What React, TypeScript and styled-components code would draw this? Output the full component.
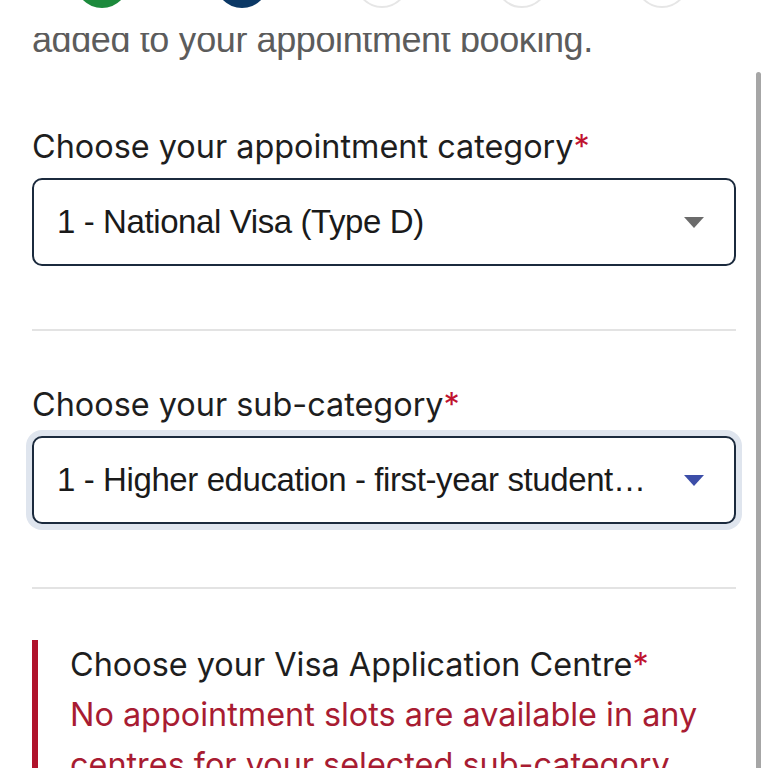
import styled, { createGlobalStyle } from "styled-components";

const GlobalStyle = createGlobalStyle`
  html, body {
    margin: 0;
    padding: 0;
    background: #ffffff;
  }
  body {
    font-family: Inter, "Noto Sans", sans-serif;
  }
`;

const steps = ["#1c8a3c", "#0b3865", "", "", ""];

const Page = styled.div`
  position: relative;
  width: 768px;
  height: 768px;
  overflow: hidden;
  background: #ffffff;
`;

const Stepper = styled.div`
  display: flex;
  gap: 86px;
  height: 33px;
  padding-left: 75px;
  overflow: hidden;
  background: #ffffff;
`;

const StepDot = styled.div<{ $color: string }>`
  flex: none;
  width: 54px;
  height: 54px;
  margin-top: -46px;
  border-radius: 50%;
  box-sizing: border-box;
  background: ${(p) => p.$color || "#ffffff"};
  border: ${(p) => (p.$color ? "none" : "2px solid #e6e6e6")};
`;

const IntroClip = styled.div`
  height: 35px;
  overflow: hidden;
  padding: 0 32px;
`;

const Intro = styled.p`
  margin: -13px 0 0;
  font-family: "Liberation Sans", Arial, sans-serif;
  font-size: 36px;
  line-height: 40px;
  color: #5c5c5c;
  letter-spacing: -0.4px;
  white-space: nowrap;
`;

const Form = styled.div`
  padding: 59px 32px 0;
  width: 704px;
`;

const Field = styled.div`
  display: flex;
  flex-direction: column;
  gap: 11px;
`;

const Label = styled.div`
  font-size: 32.4px;
  line-height: 40px;
  color: #1e1e1e;
  white-space: nowrap;
`;

const Star = styled.span`
  color: #c0132f;
`;

const Select = styled.div<{ $focused?: boolean }>`
  display: flex;
  align-items: center;
  gap: 26px;
  height: 88px;
  box-sizing: border-box;
  padding: 0 30px 0 23px;
  border: 2px solid #1b2a3d;
  border-radius: 10px;
  background: #ffffff;
  box-shadow: ${(p) => (p.$focused ? "0 0 0 6px #dfe5ee" : "none")};
`;

const SelectValue = styled.span`
  flex: 1;
  min-width: 0;
  white-space: nowrap;
  overflow: hidden;
  text-overflow: ellipsis;
  font-family: "Liberation Sans", Arial, sans-serif;
  font-size: 33px;
  color: #1a1a1a;
  letter-spacing: -0.4px;
`;

const Divider = styled.hr<{ $last?: boolean }>`
  margin: 63px 0 ${(p) => (p.$last ? "51px" : "54px")};
  border: none;
  height: 2px;
  background: #e3e3e3;
`;

const ErrorBlock = styled.div`
  border-left: 6px solid #b0132c;
  padding-left: 32px;
`;

const ErrorLabel = styled(Label)`
  line-height: 50px;
`;

const ErrorText = styled.div`
  font-size: 32.4px;
  line-height: 50px;
  color: #a81c32;
  white-space: nowrap;
`;

const Scrollbar = styled.div`
  position: absolute;
  top: 72px;
  right: 7px;
  width: 5px;
  height: 720px;
  border-radius: 3px;
  background: #a6a6a6;
`;

const Caret = ({ color }: { color: string }) => (
  <svg width="20" height="11" viewBox="0 0 20 11">
    <path d="M0 0 H20 L10 11 Z" fill={color} />
  </svg>
);

export default function App() {
  return (
    <>
      <GlobalStyle />
      <Page>
        <Stepper>
          {steps.map((c, i) => (
            <StepDot key={i} $color={c} />
          ))}
        </Stepper>
        <IntroClip>
          <Intro>added to your appointment booking.</Intro>
        </IntroClip>
        <Form>
          <Field>
            <Label>
              Choose your appointment category<Star>*</Star>
            </Label>
            <Select>
              <SelectValue>1 - National Visa (Type D)</SelectValue>
              <Caret color="#6b6b6b" />
            </Select>
          </Field>
          <Divider />
          <Field>
            <Label>
              Choose your sub-category<Star>*</Star>
            </Label>
            <Select $focused>
              <SelectValue>1 - Higher education - first-year students and exchange programmes</SelectValue>
              <Caret color="#3c4ea8" />
            </Select>
          </Field>
          <Divider $last />
          <ErrorBlock>
            <ErrorLabel>
              Choose your Visa Application Centre<Star>*</Star>
            </ErrorLabel>
            <ErrorText>
              No appointment slots are available in any
              <br />
              centres for your selected sub-category.
            </ErrorText>
          </ErrorBlock>
        </Form>
        <Scrollbar />
      </Page>
    </>
  );
}
